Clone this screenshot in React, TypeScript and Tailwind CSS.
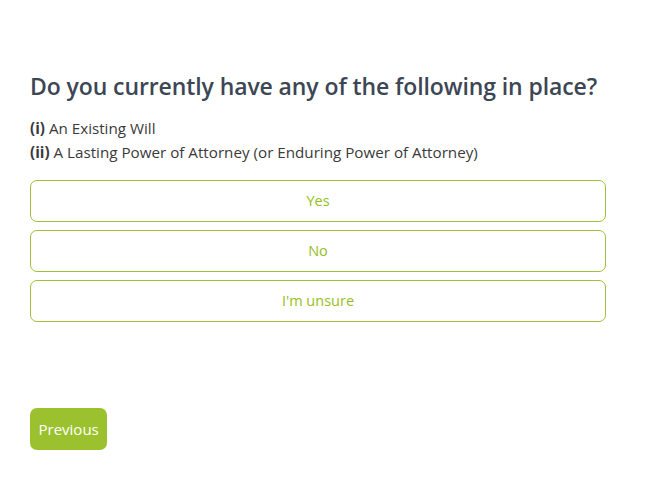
import React from "react";

const options = ["Yes", "No", "I'm unsure"];

function App() {
	return (
		<div
			className="min-h-screen bg-white pt-[68px] pl-[30px]"
			style={{ fontFamily: '"Open Sans", sans-serif' }}
		>
			<div className="w-[576px]">
				<h1 className="text-[23px] leading-[36px] font-semibold text-[#3c4654] tracking-[-0.1px]">
					Do you currently have any of the following in place?
				</h1>
				<div className="mt-[12px] text-[15.2px] leading-[24px] text-[#3a3a3a]">
					<p>
						<span className="font-bold">(i)</span> An Existing Will
					</p>
					<p>
						<span className="font-bold">(ii)</span> A Lasting Power of
						Attorney (or Enduring Power of Attorney)
					</p>
				</div>
				<div className="mt-[16px] flex flex-col gap-[8px]">
					{options.map((o) => (
						<button
							key={o}
							className="h-[42px] w-full rounded-[7px] border border-[#9dc23a] bg-white text-[14.5px] text-[#96c021]"
						>
							{o}
						</button>
					))}
				</div>
				<button className="mt-[86px] h-[42px] rounded-[7px] bg-[#9bc22e] px-[8.5px] text-[15px] text-white">
					Previous
				</button>
			</div>
		</div>
	);
}

export default App;
